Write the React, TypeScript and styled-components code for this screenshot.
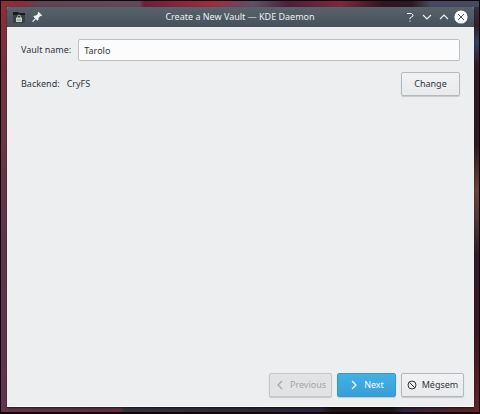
import React, { useState } from "react";
import styled, { createGlobalStyle, css } from "styled-components";

const GlobalStyle = createGlobalStyle`
  * { box-sizing: border-box; }
  body { margin: 0; }
  body, button, input {
    font-family: "Noto Sans", "Open Sans", sans-serif;
    font-size: 9px;
    line-height: 14px;
    color: #31363b;
  }
`;

const Desktop = styled.div`
  display: flex;
  min-height: 100vh;
  padding: 6px 5px 5px 6px;
  border: 1px solid #12060b;
  border-bottom-width: 2px;
  background:
    linear-gradient(90deg, #8a303c 0%, #803040 5%, #5c4452 8%, #604a5c 29%, #6a203a 30%, #9c2c40 44%, #5e5068 53%, #4a2038 60%, #7a2a3c 71%, #301520 80%, #2c1a24 86%, #454a60 90%, #454a60 100%) top / 100% 6px no-repeat,
    linear-gradient(90deg, #61344a 0%, #5a3040 25%, #30343a 26%, #2b2c34 50%, #28263a 67%, #1b1617 69%, #1b1617 82%, #2b2740 84%, #57232a 96%, #602329 100%) bottom / 100% 6px no-repeat,
    linear-gradient(180deg, #3e3348 0%, #331d2a 6%, #34455f 10%, #301724 16%, #2d1823 35%, #684537 46%, #573a32 52%, #33192a 62%, #3a1723 80%, #602329 100%) right / 6px 100% no-repeat,
    linear-gradient(180deg, #8c303a 0%, #743242 15%, #673843 35%, #5c354d 60%, #613650 100%);
`;

const Window = styled.main`
  flex: 1;
  min-width: 0;
  display: flex;
  flex-direction: column;
  border-radius: 2px 2px 1px 1px;
  overflow: hidden;
  background: #eceef0;
  box-shadow: 0 1px 2px rgba(0, 0, 0, 0.6);
`;

const TitleBar = styled.header`
  display: grid;
  grid-template-columns: 1fr auto 1fr;
  align-items: center;
  height: 20px;
  padding: 0 6px 0 5px;
  background: linear-gradient(#59636b, #465059);
  color: #eff0f1;
`;

const Title = styled.h1`
  margin: 0;
  font-size: 9px;
  font-weight: 400;
  line-height: 14px;
  white-space: nowrap;
`;

const TitleTools = styled.div<{ $end?: boolean }>`
  display: flex;
  align-items: center;
  gap: ${(p) => (p.$end ? 3 : 4)}px;
  justify-content: ${(p) => (p.$end ? "flex-end" : "flex-start")};
`;

const TitleButton = styled.button`
  display: flex;
  padding: 0;
  border: 0;
  background: none;
  color: inherit;
`;

const Content = styled.section`
  flex: 1;
  display: flex;
  flex-direction: column;
  gap: 11px;
  padding: 12px 14px;
`;

const Row = styled.div`
  display: flex;
  align-items: center;
  gap: 7px;
`;

const TextInput = styled.input`
  flex: 1;
  min-width: 0;
  height: 22px;
  padding: 0 5px;
  border: 1px solid #bec1c3;
  border-radius: 2px;
  background: #fcfcfc;
  outline: none;
`;

const BackendName = styled.span`
  flex: 1;
`;

const Footer = styled.footer`
  display: flex;
  justify-content: flex-end;
  gap: 5px;
  padding: 10px;
  border-bottom: 1px solid #fafafb;
  padding-bottom: 9px;
`;

const primary = css`
  border-color: #3498cf;
  background: linear-gradient(#43b1e5, #379fd8);
  color: #fcfcfc;
`;

const PushButton = styled.button<{ $primary?: boolean; $wide?: boolean }>`
  display: flex;
  align-items: center;
  justify-content: center;
  gap: 5px;
  min-width: ${(p) => (p.$wide ? 63 : 59)}px;
  height: 24px;
  padding: 0 4px;
  border: 1px solid #b6b9bc;
  border-radius: 2px;
  background: linear-gradient(#f1f2f3, #e9eaec);
  box-shadow: 0 1px 1px rgba(0, 0, 0, 0.16);
  white-space: nowrap;

  &:disabled {
    border-color: #c4c6c8;
    background: #e2e3e4;
    color: #a3a6a9;
  }

  ${(p) => p.$primary && primary}
`;

const Icon = styled.svg`
  display: block;
  flex: none;
  fill: none;
  stroke: currentColor;
`;

const VaultIcon = () => (
  <Icon width="14" height="14" viewBox="0 0 14 14" aria-hidden="true">
    <path d="M1 3h12v10H1z" fill="#3a4043" stroke="none" />
    <path d="M1 2h5l1 1h6v2H1z" fill="#1b1a20" stroke="none" />
    <path d="M5.5 8V6.5a1.5 1.5 0 0 1 3 0V8" stroke="#a9b3a9" />
    <path d="M4 7.5h6v4.5H4z" fill="#c6d2bd" stroke="none" />
    <path d="M5 9h4v2H5z" fill="#a3b39b" stroke="none" />
  </Icon>
);

const PinIcon = () => (
  <Icon width="14" height="14" viewBox="0 0 14 14" aria-hidden="true">
    <path d="M8.6 1.8 12.2 5.4 11.2 6.3 10.4 6.1 8.5 8.1 8.4 9.9 7.5 10.8 3.3 6.6 4.2 5.7 6 5.6 8 3.7 7.7 2.7z" fill="currentColor" stroke="none" />
    <path d="M5.8 8.4 2.6 11.6" strokeWidth="1.3" />
  </Icon>
);

const HelpIcon = () => (
  <Icon width="14" height="14" viewBox="0 0 14 14" aria-hidden="true">
    <path d="M4 3.5H8.5L10 5V6L7 8V9.2M7 10.5V11.7" />
  </Icon>
);

const ChevronIcon = ({ d }: { d: string }) => (
  <Icon width="14" height="14" viewBox="0 0 14 14" aria-hidden="true">
    <path d={d} strokeWidth="1.1" />
  </Icon>
);

const CloseIcon = () => (
  <Icon width="14" height="14" viewBox="0 0 14 14" aria-hidden="true">
    <circle cx="7" cy="7" r="6.6" fill="#fcfcfc" stroke="none" />
    <path d="M4 4l6 6M10 4l-6 6" stroke="#4a545c" />
  </Icon>
);

const CancelIcon = () => (
  <Icon width="10" height="10" viewBox="0 0 10 10" aria-hidden="true">
    <circle cx="5" cy="5" r="4" />
    <path d="M2.2 2.2 7.8 7.8" />
  </Icon>
);

const ArrowIcon = ({ d }: { d: string }) => (
  <Icon width="10" height="10" viewBox="0 0 10 10" aria-hidden="true">
    <path d={d} strokeWidth="1.2" />
  </Icon>
);

export default function App() {
  const [name, setName] = useState("Tarolo");
  return (
    <>
      <GlobalStyle />
      <Desktop>
        <Window>
          <TitleBar>
            <TitleTools>
              <TitleButton aria-label="Window menu"><VaultIcon /></TitleButton>
              <TitleButton aria-label="On all desktops"><PinIcon /></TitleButton>
            </TitleTools>
            <Title>Create a New Vault — KDE Daemon</Title>
            <TitleTools $end>
              <TitleButton aria-label="Help"><HelpIcon /></TitleButton>
              <TitleButton aria-label="Minimize"><ChevronIcon d="M3 5l4 4 4-4" /></TitleButton>
              <TitleButton aria-label="Maximize"><ChevronIcon d="M3 9l4-4 4 4" /></TitleButton>
              <TitleButton aria-label="Close"><CloseIcon /></TitleButton>
            </TitleTools>
          </TitleBar>
          <Content>
            <Row>
              <label htmlFor="vault-name">Vault name:</label>
              <TextInput id="vault-name" value={name} onChange={(e) => setName(e.target.value)} />
            </Row>
            <Row>
              <span>Backend:</span>
              <BackendName>CryFS</BackendName>
              <PushButton type="button">Change</PushButton>
            </Row>
          </Content>
          <Footer>
            <PushButton type="button" $wide disabled>
              <ArrowIcon d="M7 1 3 5l4 4" />
              Previous
            </PushButton>
            <PushButton type="button" $primary>
              <ArrowIcon d="M3 1l4 4-4 4" />
              Next
            </PushButton>
            <PushButton type="button" $wide>
              <CancelIcon />
              Mégsem
            </PushButton>
          </Footer>
        </Window>
      </Desktop>
    </>
  );
}
